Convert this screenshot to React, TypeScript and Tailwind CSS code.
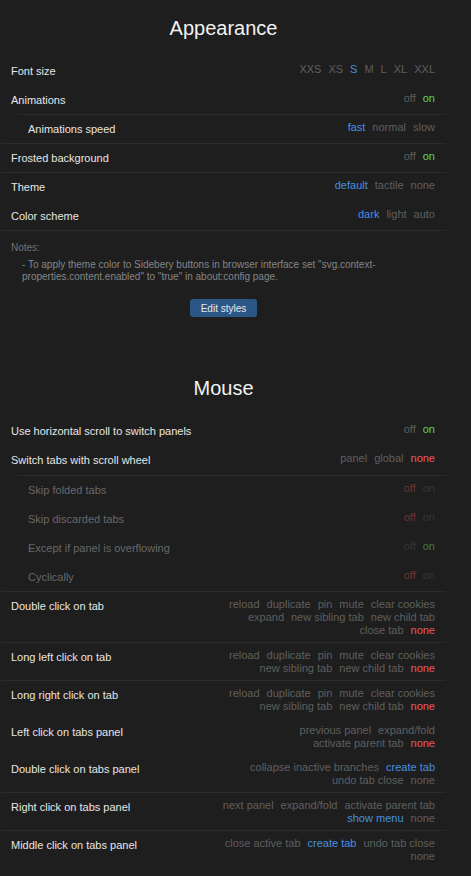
type Tone = 'idle' | 'blue' | 'green' | 'red' | 'dimRed' | 'dimGreen' | 'dim';

interface Opt {
  text: string;
  tone?: Tone;
}

const toneClass: Record<Tone, string> = {
  idle: 'text-[#5e5e5e]',
  blue: 'text-[#4690e0]',
  green: 'text-[#5cd35c]',
  red: 'text-[#e65a5a]',
  dimRed: 'text-[#6e3434]',
  dimGreen: 'text-[#3f7f3f]',
  dim: 'text-[#363636]',
};

function Options({ opts }: { opts: Opt[] }) {
  return (
    <div className="mt-[1px] flex max-w-[222px] flex-wrap justify-end gap-x-[7px] text-[11px] leading-[13px]">
      {opts.map((o, i) => (
        <span key={i} className={`whitespace-nowrap ${toneClass[o.tone ?? 'idle']}`}>
          {o.text}
        </span>
      ))}
    </div>
  );
}

function Row({
  label,
  opts,
  sep = false,
  tight = false,
  disabled = false,
}: {
  label: string;
  opts: Opt[];
  sep?: boolean;
  tight?: boolean;
  disabled?: boolean;
}) {
  return (
    <div
      className={`flex items-start justify-between pl-[10px] pr-[11px] pt-[5px] ${
        tight ? 'pb-[4px]' : 'pb-[5px]'
      } ${sep ? 'border-b border-[#2b2b2b]' : ''}`}
    >
      <span
        className={`text-[11px] leading-[19px] ${disabled ? 'text-[#686868]' : 'text-[#e6e6e6]'}`}
      >
        {label}
      </span>
      <Options opts={opts} />
    </div>
  );
}

function Title({ children }: { children: string }) {
  return (
    <h2 className="pt-[16px] pb-[17px] text-center text-[20px] leading-[24px] text-[#f2f2f2]">
      {children}
    </h2>
  );
}

const onOff = (on: boolean): Opt[] => [
  { text: 'off', tone: on ? 'idle' : 'red' },
  { text: 'on', tone: on ? 'green' : 'idle' },
];

export default function App() {
  return (
    <div
      className="min-h-screen bg-[#1e1e1e]"
      style={{ fontFamily: '"Liberation Sans", Arial, sans-serif' }}
    >
      <div className="ml-[1px] w-[445px]">
        {/* Appearance */}
        <Title>Appearance</Title>
        <Row
          label="Font size"
          opts={[
            { text: 'XXS' },
            { text: 'XS' },
            { text: 'S', tone: 'blue' },
            { text: 'M' },
            { text: 'L' },
            { text: 'XL' },
            { text: 'XXL' },
          ]}
        />
        <div className="border-b border-[#2b2b2b]">
          <Row label="Animations" opts={onOff(true)} tight />
          <div className="ml-[17px] border-t border-[#2b2b2b]">
            <Row
              label="Animations speed"
              opts={[{ text: 'fast', tone: 'blue' }, { text: 'normal' }, { text: 'slow' }]}
              tight
            />
          </div>
        </div>
        <Row label="Frosted background" opts={onOff(true)} sep tight />
        <Row
          label="Theme"
          opts={[{ text: 'default', tone: 'blue' }, { text: 'tactile' }, { text: 'none' }]}
        />
        <Row
          label="Color scheme"
          opts={[{ text: 'dark', tone: 'blue' }, { text: 'light' }, { text: 'auto' }]}
          sep
          tight
        />

        {/* Notes */}
        <div className="pt-[11px] pl-[10px] pr-[11px] text-[10px] leading-[12px]">
          <div className="text-[#727272]">Notes:</div>
          <p className="mt-[5px] pl-[11px] text-[#858585]">
            - To apply theme color to Sidebery buttons in browser interface set
            "svg.context-properties.content.enabled" to "true" in about:config page.
          </p>
        </div>
        <div className="mt-[16px] flex justify-center">
          <button className="h-[18px] rounded-[3px] bg-[#2a5788] px-[11px] text-[10px] text-[#e8e8e8]">
            Edit styles
          </button>
        </div>

        {/* Mouse */}
        <div className="mt-[43px]">
          <Title>Mouse</Title>
        </div>
        <Row label="Use horizontal scroll to switch panels" opts={onOff(true)} />
        <div className="border-b border-[#2b2b2b]">
          <Row
            label="Switch tabs with scroll wheel"
            opts={[{ text: 'panel' }, { text: 'global' }, { text: 'none', tone: 'red' }]}
          />
          <div className="ml-[17px] border-t border-[#2b2b2b]">
            <Row
              label="Skip folded tabs"
              disabled
              opts={[{ text: 'off', tone: 'dimRed' }, { text: 'on', tone: 'dim' }]}
            />
            <Row
              label="Skip discarded tabs"
              disabled
              opts={[{ text: 'off', tone: 'dimRed' }, { text: 'on', tone: 'dim' }]}
            />
            <Row
              label="Except if panel is overflowing"
              disabled
              opts={[{ text: 'off', tone: 'dim' }, { text: 'on', tone: 'dimGreen' }]}
            />
            <Row
              label="Cyclically"
              disabled
              tight
              opts={[{ text: 'off', tone: 'dimRed' }, { text: 'on', tone: 'dim' }]}
            />
          </div>
        </div>
        <Row
          label="Double click on tab"
          sep
          opts={[
            { text: 'reload' },
            { text: 'duplicate' },
            { text: 'pin' },
            { text: 'mute' },
            { text: 'clear cookies' },
            { text: 'expand' },
            { text: 'new sibling tab' },
            { text: 'new child tab' },
            { text: 'close tab' },
            { text: 'none', tone: 'red' },
          ]}
        />
        <Row
          label="Long left click on tab"
          sep
          opts={[
            { text: 'reload' },
            { text: 'duplicate' },
            { text: 'pin' },
            { text: 'mute' },
            { text: 'clear cookies' },
            { text: 'new sibling tab' },
            { text: 'new child tab' },
            { text: 'none', tone: 'red' },
          ]}
        />
        <Row
          label="Long right click on tab"
          opts={[
            { text: 'reload' },
            { text: 'duplicate' },
            { text: 'pin' },
            { text: 'mute' },
            { text: 'clear cookies' },
            { text: 'new sibling tab' },
            { text: 'new child tab' },
            { text: 'none', tone: 'red' },
          ]}
        />
        <Row
          label="Left click on tabs panel"
          opts={[
            { text: 'previous panel' },
            { text: 'expand/fold' },
            { text: 'activate parent tab' },
            { text: 'none', tone: 'red' },
          ]}
        />
        <Row
          label="Double click on tabs panel"
          sep
          opts={[
            { text: 'collapse inactive branches' },
            { text: 'create tab', tone: 'blue' },
            { text: 'undo tab close' },
            { text: 'none' },
          ]}
        />
        <Row
          label="Right click on tabs panel"
          sep
          opts={[
            { text: 'next panel' },
            { text: 'expand/fold' },
            { text: 'activate parent tab' },
            { text: 'show menu', tone: 'blue' },
            { text: 'none' },
          ]}
        />
        <Row
          label="Middle click on tabs panel"
          opts={[
            { text: 'close active tab' },
            { text: 'create tab', tone: 'blue' },
            { text: 'undo tab close' },
            { text: 'none' },
          ]}
        />
      </div>
    </div>
  );
}
